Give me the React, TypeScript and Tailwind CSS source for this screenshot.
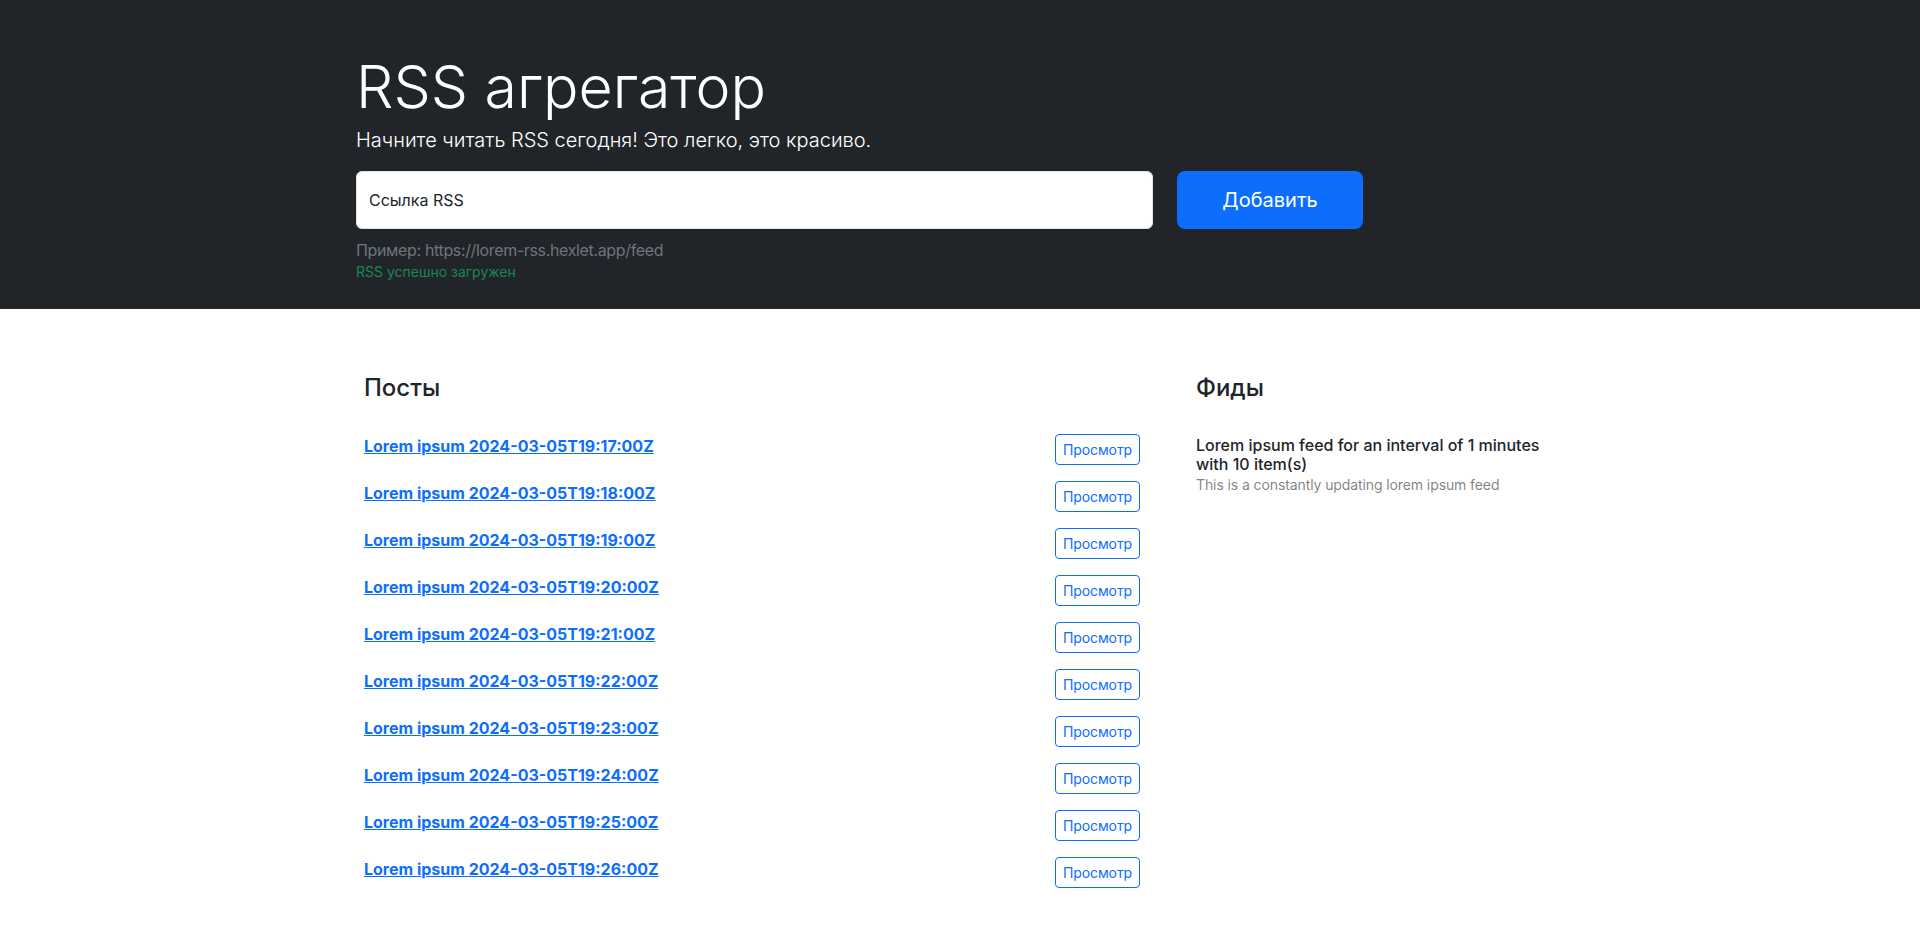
import React from "react";

const posts = [
  "2024-03-05T19:17:00Z",
  "2024-03-05T19:18:00Z",
  "2024-03-05T19:19:00Z",
  "2024-03-05T19:20:00Z",
  "2024-03-05T19:21:00Z",
  "2024-03-05T19:22:00Z",
  "2024-03-05T19:23:00Z",
  "2024-03-05T19:24:00Z",
  "2024-03-05T19:25:00Z",
  "2024-03-05T19:26:00Z",
];

export default function App() {
  return (
    <div className="min-h-screen bg-white font-['Inter','Noto_Sans',sans-serif] text-[#212529]">
      {/* HEADER */}
      <section className="h-[309px] bg-[#212529] pt-[51px]">
        <div className="mx-auto w-[1208px] text-white">
          <h1 className="text-[59px] font-light leading-[72px]">
            RSS агрегатор
          </h1>
          <p className="mt-[2px] text-[20px] font-light leading-[30px]">
            Начните читать RSS сегодня! Это легко, это красиво.
          </p>

          <form
            className="mt-4 flex gap-[24px]"
            onSubmit={(e) => e.preventDefault()}
          >
            <input
              aria-label="url"
              placeholder="Ссылка RSS"
              className="h-[58px] w-[797px] rounded-[6px] border border-[#dee2e6] bg-white px-[12px] text-[16px] text-[#212529] outline-none placeholder:text-[#212529]"
            />
            <button
              type="submit"
              className="h-[58px] w-[186px] rounded-[8px] bg-[#0d6efd] text-[20px] text-white"
            >
              Добавить
            </button>
          </form>

          <p className="mt-[9px] text-[16px] leading-6 tracking-[-0.35px] text-[#6c757d]">
            Пример: https://lorem-rss.hexlet.app/feed
          </p>
          <p className="text-[14px] leading-[20px] text-[#198754]">
            RSS успешно загружен
          </p>
        </div>
      </section>

      {/* MAIN */}
      <main className="mx-auto flex w-[1224px] gap-6 pt-12 pb-12">
        {/* POSTS */}
        <div className="w-[808px]">
          <div className="p-4">
            <h2 className="mb-2 text-[24px] font-medium leading-[29px]">
              Посты
            </h2>
          </div>
          <ul>
            {posts.map((date) => (
              <li
                key={date}
                className="flex items-start justify-between px-4 py-2"
              >
                <a
                  href="#"
                  className="text-[16px] font-bold leading-6 text-[#0d6efd] underline"
                >
                  Lorem ipsum {date}
                </a>
                <button className="rounded-[4px] border border-[#0d6efd] px-[7px] py-1 text-[14px] leading-[21px] tracking-[-0.1px] text-[#0d6efd]">
                  Просмотр
                </button>
              </li>
            ))}
          </ul>
        </div>

        {/* FEEDS */}
        <div className="w-[392px]">
          <div className="p-4">
            <h2 className="mb-2 text-[24px] font-medium leading-[29px]">
              Фиды
            </h2>
          </div>
          <ul>
            <li className="px-4 pt-[10px] pb-2">
              <h3 className="text-[16px] font-medium leading-[19px]">
                Lorem ipsum feed for an interval of 1 minutes with 10 item(s)
              </h3>
              <p className="text-[14px] leading-[21px] tracking-[-0.1px] text-black/50">
                This is a constantly updating lorem ipsum feed
              </p>
            </li>
          </ul>
        </div>
      </main>
    </div>
  );
}
